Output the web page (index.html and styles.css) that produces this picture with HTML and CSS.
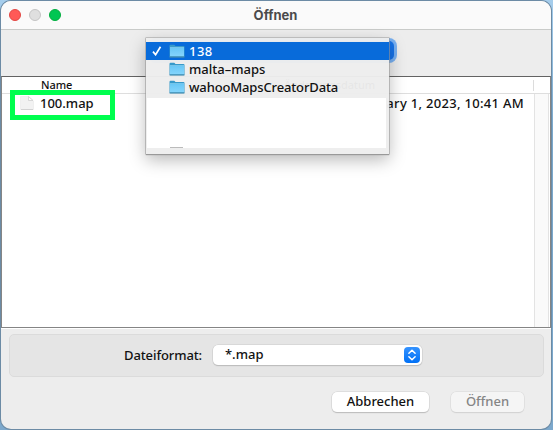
FILE: index.html
```html
<!DOCTYPE html>
<html lang="de">
<head>
<meta charset="utf-8">
<title>Öffnen</title>
<link rel="stylesheet" href="styles.css">
</head>
<body>
<svg class="defs" width="0" height="0" aria-hidden="true">
  <defs>
    <linearGradient id="sky" x1="0" y1="0" x2="0" y2="1"><stop offset="0" stop-color="#69c7f6"/><stop offset="1" stop-color="#85d5fc"/></linearGradient>
    <symbol id="folder" viewBox="0 0 16 14">
      <path d="M.5 2Q.5.8 1.5.8H5.3L6.5 2H14.5Q15.5 2 15.5 3V12.5Q15.5 13.3 14.6 13.3H1.4Q.5 13.3.5 12.5Z" fill="#3799ca"/>
      <path d="M1 4H15V12.3H1Z" fill="url(#sky)"/>
      <path d="M1 3.5H15" stroke="#91d9f8" stroke-width=".7"/>
      <path d="M.5 13H15.5" stroke="#4c8caa"/>
    </symbol>
  </defs>
</svg>
<div class="window">
  <header class="titlebar">
    <div class="lights"><i class="light red"></i><i class="light gray"></i><i class="light green"></i></div>
    <h1 class="title">Öffnen</h1>
  </header>
  <div class="toolbar"><div class="path-select"></div></div>
  <section class="files">
    <div class="columns"><span class="col-name">Name</span><span class="col-date">Änderungsdatum</span><i class="col-end"></i></div>
    <div class="list">
      <div class="file">
        <svg class="doc" width="14" height="14" viewBox="0 0 14 14"><path d="M.5.5H8.5L13.5 5V13.5H.5Z" fill="#f2f2f2" stroke="#efefef"/><path d="M8.5.5V4.5H13Z" fill="#fff" stroke="#cfcfcf" stroke-width=".8"/><path d="M1 13.5H13" stroke="#d2d2d2"/></svg>
        <span class="file-name">100.map</span>
        <span class="file-date">January 1, 2023, 10:41 AM</span>
      </div>
      <div class="track"></div>
    </div>
  </section>
  <footer class="bottom">
    <div class="format">
      <span class="format-label">Dateiformat:</span>
      <div class="select"><span class="select-value">*.map</span>
        <svg class="stepper" width="16" height="16" viewBox="0 0 16 16"><path d="M4.9 6.2 8 3.2 11.1 6.2M4.9 9.8 8 12.8 11.1 9.8" fill="none" stroke="#fff" stroke-width="1.5" stroke-linecap="round" stroke-linejoin="round"/></svg>
      </div>
    </div>
    <div class="actions"><button class="btn cancel">Abbrechen</button><button class="btn open" disabled>Öffnen</button></div>
  </footer>
</div>
<div class="marker"></div>
<div class="menu">
  <div class="item selected"><svg class="check" width="10" height="10" viewBox="0 0 10 10"><path d="M1 5.6 3.6 8.7 8.5.8" fill="none" stroke="#fff" stroke-width="1.7"/></svg><svg class="folder" width="16" height="14"><use href="#folder"/></svg><span class="digits">138</span></div>
  <div class="item"><i class="check"></i><svg class="folder" width="16" height="14"><use href="#folder"/></svg><span>malta–maps</span></div>
  <div class="item"><i class="check"></i><svg class="folder" width="16" height="14"><use href="#folder"/></svg><span class="tight">wahooMapsCreatorData</span></div>
  <div class="blank"><i class="sliver"></i></div>
</div>
</body>
</html>
```

FILE: styles.css
```css
* { box-sizing: border-box; }
body {
  margin: 0;
  width: 553px;
  height: 430px;
  overflow: hidden;
  padding: 1px 2px 1px 1px;
  background: linear-gradient(#a5cdec, #7ba9cd 30%, #7ca8cc);
  font: 500 13px/18px "Noto Sans", sans-serif;
  color: #111;
}
.defs { position: absolute; }
.window {
  height: 428px;
  border-radius: 10px;
  background: #ededed;
  overflow: hidden;
  box-shadow: 0 0 0 1px #6c8ba5;
  display: flex;
  flex-direction: column;
}
.titlebar {
  height: 29px;
  flex: none;
  background: #fafafa;
  border-bottom: 1px solid #c9cbc9;
  display: grid;
  grid-template-columns: 1fr auto 1fr;
  align-items: center;
}
.lights { display: flex; gap: 8px; padding-left: 8px; }
.light { width: 12px; height: 12px; border-radius: 50%; border: 1px solid; }
.red { background: #ff5a57; border-color: #e24743; }
.gray { background: #dfdfdf; border-color: #c4c4c4; }
.green { background: #00c653; border-color: #00ad3e; }
.title { margin: 0 1px 0 0; font: bold 13px/18px Inter, sans-serif; color: #4b4b4b; }
.toolbar { height: 46px; flex: none; padding: 11px 157px 0 150px; }
.path-select { height: 19px; border-radius: 5px; background: #1672e8; box-shadow: 0 0 0 3px #79b1f2; }
.files {
  height: 252px;
  flex: none;
  background: #fff;
  border: 1px solid #858585;
  border-top-color: #636363;
  display: flex;
  flex-direction: column;
}
.columns {
  height: 17px;
  flex: none;
  border-bottom: 1px solid #dedede;
  display: flex;
  font-size: 11px;
  line-height: 16px;
  letter-spacing: -.1px;
  padding-left: 39px;
}
.col-name { width: 243px; }
.col-date { width: 92px; }
.col-end { width: 1px; height: 11px; background: #dcdcdc; margin: 3px 0 0 157px; }
.list { flex: 1; display: flex; }
.file { flex: 1; height: 18px; display: flex; align-items: center; padding-left: 18px; }
.file-name { margin-left: 6px; width: 60px; }
.file-date { margin-left: auto; margin-right: 10px; letter-spacing: .3px; white-space: nowrap; }
.track { width: 15px; margin-right: 1px; background: #fafafa; border: solid #e3e3e3; border-width: 0 1px; }
.bottom { flex: 1; padding: 5px 7px 0 8px; border-top: 1px solid #fff; }
.format {
  height: 43px;
  background: #e5e5e5;
  border: 1px solid #dbdbdb;
  border-radius: 5px;
  display: flex;
  align-items: center;
  padding-left: 114px;
}
.format-label { width: 89px; white-space: nowrap; letter-spacing: -.1px; padding-bottom: 1px; }
.select {
  width: 209px;
  height: 20px;
  margin-top: -2px;
  border-radius: 5px;
  background: #fff;
  box-shadow: 0 0 0 .5px #ccc, 0 1px 1px #aaa;
  display: flex;
  align-items: center;
  justify-content: space-between;
  padding: 0 2px 0 12px;
}
.select-value { padding-bottom: 1px; }
.stepper { border-radius: 4px; background: linear-gradient(#3593ff, #0070f5); }
.actions { display: flex; justify-content: flex-end; gap: 22px; padding: 15px 20px 0 0; }
.btn {
  height: 20px;
  border: 0;
  padding: 0 0 2px;
  border-radius: 5px;
  background: #fff;
  box-shadow: 0 0 0 .5px #d0d0d0, 0 1px 1px #aaa;
  font: inherit;
  color: #111;
}
.cancel { width: 97px; }
.open { width: 73px; background: #f5f5f5; color: #858585; box-shadow: 0 0 0 .5px #d8d8d8, 0 1px 1px #ccc; }
.marker { position: absolute; left: 10px; top: 90px; width: 105px; height: 30px; border: 5px solid #00ff4f; }
.menu {
  position: absolute;
  left: 146px;
  top: 38px;
  width: 243px;
  height: 116px;
  padding-top: 4px;
  background: rgba(237, 237, 237, .97);
  box-shadow: 0 0 0 .5px #999, 0 1px 1px #999, 0 6px 16px rgba(0, 0, 0, .28);
}
.item { height: 18px; display: flex; align-items: center; padding-left: 6px; white-space: nowrap; }
.selected { background: #086bda; color: #fff; }
.check { width: 10px; margin-right: 7px; }
.folder { margin-right: 4px; }
.digits { letter-spacing: .5px; }
.tight { letter-spacing: -.14px; }
.blank { height: 50px; margin: 2px 3px 0 1px; background: #fff; display: flex; align-items: flex-end; }
.sliver { width: 13px; height: 1px; margin-left: 23px; background: #bbb; }
```
